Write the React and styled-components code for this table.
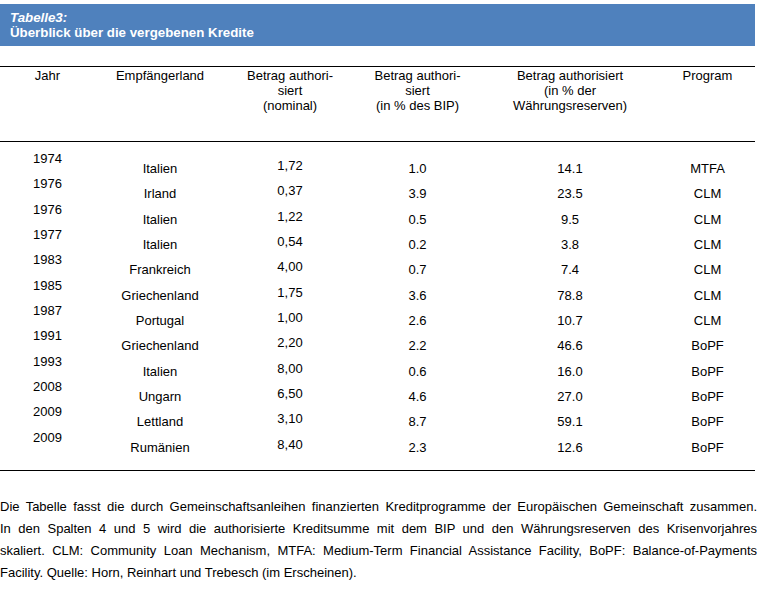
import React from 'react';
import styled, { createGlobalStyle } from 'styled-components';

const GlobalStyle = createGlobalStyle`
  html, body {
    margin: 0;
    padding: 0;
    background: #ffffff;
  }
  body {
    font-family: "Liberation Sans", Arial, sans-serif;
    color: #000000;
  }
`;

const Page = styled.div`
  width: 757px;
  height: 589px;
  overflow: hidden;
  padding-top: 4px;
  box-sizing: border-box;
`;

const TitleBar = styled.div`
  width: 755px;
  height: 42px;
  background: #4f81bd;
  color: #ffffff;
  font-weight: bold;
  font-size: 13.3px;
  line-height: 15px;
  padding: 6px 0 0 10px;
  box-sizing: border-box;
`;

const TitleTop = styled.div`
  font-style: italic;
`;

const Table = styled.div`
  margin-top: 20px;
  width: 755px;
  border-top: 1px solid #000;
  border-bottom: 1px solid #000;
`;

const cols = '95px 130px 130px 125px 180px 1fr';

const HeadRow = styled.div`
  display: grid;
  grid-template-columns: ${cols};
  height: 75px;
  border-bottom: 1px solid #000;
  font-size: 13px;
  line-height: 15px;
  text-align: center;
  padding-top: 1px;
  box-sizing: border-box;
`;

const Body = styled.div`
  padding: 9px 0 15px;
`;

const Row = styled.div`
  display: grid;
  grid-template-columns: ${cols};
  height: 25.35px;
  font-size: 13px;
  line-height: 15px;
  text-align: center;
`;

const Cell = styled.div`
  padding-top: ${(p) => p.$drop}px;
  white-space: nowrap;
`;

const Note = styled.div`
  margin-top: 25px;
  width: 757px;
  font-size: 13px;
  line-height: 22px;
`;

const NoteLine = styled.div`
  white-space: nowrap;
  text-align: justify;
  text-align-last: ${(p) => (p.$last ? 'left' : 'justify')};
`;

const rows = [
  ['1974', 'Italien', '1,72', '1.0', '14.1', 'MTFA'],
  ['1976', 'Irland', '0,37', '3.9', '23.5', 'CLM'],
  ['1976', 'Italien', '1,22', '0.5', '9.5', 'CLM'],
  ['1977', 'Italien', '0,54', '0.2', '3.8', 'CLM'],
  ['1983', 'Frankreich', '4,00', '0.7', '7.4', 'CLM'],
  ['1985', 'Griechenland', '1,75', '3.6', '78.8', 'CLM'],
  ['1987', 'Portugal', '1,00', '2.6', '10.7', 'CLM'],
  ['1991', 'Griechenland', '2,20', '2.2', '46.6', 'BoPF'],
  ['1993', 'Italien', '8,00', '0.6', '16.0', 'BoPF'],
  ['2008', 'Ungarn', '6,50', '4.6', '27.0', 'BoPF'],
  ['2009', 'Lettland', '3,10', '8.7', '59.1', 'BoPF'],
  ['2009', 'Rumänien', '8,40', '2.3', '12.6', 'BoPF'],
];

// vertical offset of each column inside a row, as in the original
const drops = [0, 10, 7, 10, 10, 10];

const noteLines = [
  'Die Tabelle fasst die durch Gemeinschaftsanleihen finanzierten Kreditprogramme der Europäischen Gemeinschaft zusammen.',
  'In den Spalten 4 und 5 wird die authorisierte Kreditsumme mit dem BIP und den Währungsreserven des Krisenvorjahres',
  'skaliert. CLM: Community Loan Mechanism, MTFA: Medium-Term Financial Assistance Facility, BoPF: Balance-of-Payments',
  'Facility. Quelle: Horn, Reinhart und Trebesch (im Erscheinen).',
];

export default function App() {
  return (
    <Page>
      <GlobalStyle />
      <TitleBar>
        <TitleTop>Tabelle3:</TitleTop>
        <div>Überblick über die vergebenen Kredite</div>
      </TitleBar>
      <Table>
        <HeadRow>
          <div>Jahr</div>
          <div>Empfängerland</div>
          <div>Betrag authori-<br />siert<br />(nominal)</div>
          <div>Betrag authori-<br />siert<br />(in % des BIP)</div>
          <div>Betrag authorisiert<br />(in % der<br />Währungsreserven)</div>
          <div>Program</div>
        </HeadRow>
        <Body>
          {rows.map((r, i) => (
            <Row key={i}>
              {r.map((v, j) => (
                <Cell key={j} $drop={drops[j]}>{v}</Cell>
              ))}
            </Row>
          ))}
        </Body>
      </Table>
      <Note>
        {noteLines.map((t, i) => (
          <NoteLine key={i} $last={i === noteLines.length - 1}>{t}</NoteLine>
        ))}
      </Note>
    </Page>
  );
}
